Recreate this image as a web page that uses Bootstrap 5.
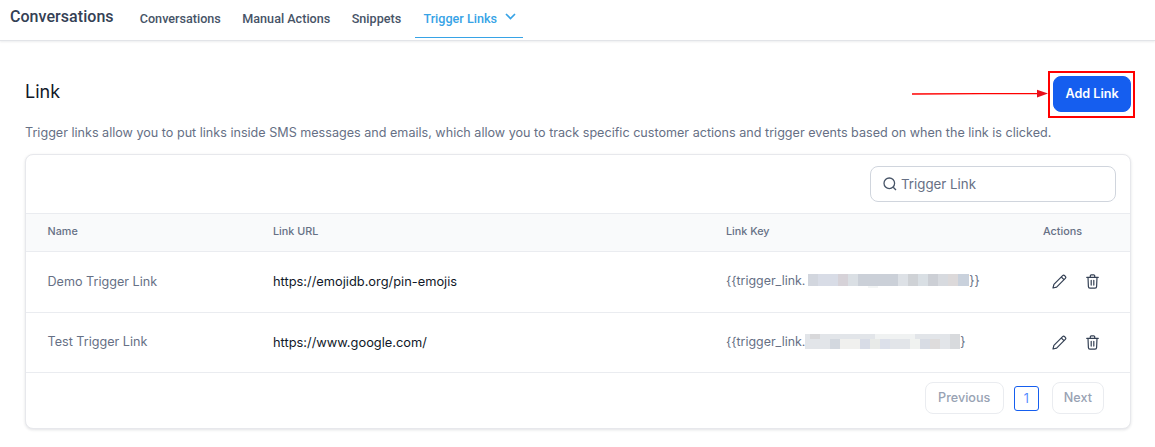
<!doctype html>
<html lang="en">
<head>
<meta charset="utf-8">
<title>Trigger Links</title>
<link href="https://cdn.jsdelivr.net/npm/bootstrap@5.3.0/dist/css/bootstrap.min.css" rel="stylesheet">
<style>
html,body{height:447px;overflow:hidden}
body{font-family:Inter,"Liberation Sans",sans-serif;background:#fff;color:#475467}
.topbar{height:41px;border-bottom:1px solid #e2e4e8;box-shadow:0 1px 2px rgba(16,24,40,.08);padding-left:10px;font-family:Roboto,"Liberation Sans",sans-serif}
.brandname{font-size:16px;font-weight:500;color:#344054;line-height:20px;margin-top:7px;width:119px;letter-spacing:.05px}
.tabitem{font-size:12.6px;font-weight:500;color:#475467;height:38px;line-height:37px;padding:0 10.75px;text-decoration:none;display:block}
.tabitem.on{color:#37a3e6;border-bottom:1px solid #37a3e6;padding:0 7px 0 8px;margin-left:3.5px}
.chevronmark{margin-top:13px}
.pagebody{padding:0 24px 0 25px}
.headrow{height:83px;padding:36px 0 0}
.pagetitle{font-size:18px;font-weight:400;color:#101828;line-height:24px;margin:3px 0 0}
.addbtn{position:absolute;right:0;top:35px;width:78px;height:36px;background:#155eef;border:1px solid #155eef;border-radius:8px;color:#fff;font-size:12.6px;font-weight:600;padding:0}
.addbtn:hover{background:#155eef;color:#fff}
.redbox{position:absolute;right:-4px;top:30px;width:87px;height:47px;border:2px solid #f00;pointer-events:none}
.redarrow{position:absolute;left:912px;top:45px}
.leadtext{font-size:12.6px;line-height:18px;color:#667085;margin:0 0 12px;white-space:nowrap}
.linkcard{height:275px;border:1px solid #e7e8ec;border-radius:8px;box-shadow:0 1px 3px rgba(16,24,40,.12);overflow:hidden;background:#fff}
.searchrow{height:58px;padding:11px 14px 0 0}
.searchbox{width:246px;height:36px;border:1px solid #d0d5dd;border-radius:8px;padding-left:12px;gap:4px;color:#667085;font-size:13.3px}
.searchlabel{padding-top:2px}
.linktable{table-layout:fixed;width:100%;margin:0;font-size:12.6px;color:#667085}
.linktable th{background:#f9fafb;font-size:10.8px;font-weight:500;color:#667085;height:38px;padding:0 0 0 22px;vertical-align:middle;border-top:1px solid #eaecf0;border-bottom:1px solid #eaecf0}
.linktable th:first-child{padding-left:21.5px}
.linktable td{height:60.5px;padding:0 0 0 22px;vertical-align:middle;color:#667085;border-bottom:1px solid #eaecf0;background:#fff}
.linktable td:first-child{padding:1px 0 0 21.5px}
.linktable td.urlcell{color:#101828;font-size:12.85px}
.linktable td.keycell{font-size:12.4px;white-space:nowrap}
.colname{width:225px}.colurl{width:453px}.colkey{width:317px}
.actioncell{white-space:nowrap}
.linktable td.actioncell{padding-left:31px}
.actioncell svg{margin-right:19px}
.pixelbar{vertical-align:-3px}
.pagerrow{height:54px;padding:9px 26px 0 0}
.pagerbtn{height:32px;border:1px solid #eaecf0;border-radius:8px;background:#fff;color:#98a2b3;font-size:12.6px;font-weight:500;padding:0 11px;line-height:30px}
.pagerbtn.wider{padding:0 12.5px}
.pagernum{width:25px;height:25px;border:1px solid #155eef;border-radius:3px;color:#528bff;font-size:12.6px;text-align:center;line-height:23px;margin:4px 13px 0 10px}
</style>
</head>
<body>
<nav class="topbar d-flex align-items-start">
  <div class="brandname">Conversations</div>
  <div class="d-flex">
    <a class="tabitem" href="#">Conversations</a>
    <a class="tabitem" href="#">Manual Actions</a>
    <a class="tabitem" href="#">Snippets</a>
    <a class="tabitem on d-flex align-items-start gap-2" href="#">Trigger Links
      <svg width="11" height="7" viewBox="0 0 11 7" class="chevronmark" fill="none" stroke="#37a3e6" stroke-width="1.7"><path d="M1 1l4.5 4.5L10 1"/></svg>
    </a>
  </div>
</nav>
<main class="pagebody position-relative">
  <div class="headrow position-relative">
    <h1 class="pagetitle">Link</h1>
    <button class="btn addbtn" type="button">Add Link</button>
    <div class="redbox"></div>
  </div>
  <svg class="redarrow" width="137" height="14" viewBox="0 0 137 14"><path d="M0 8L70 7.7l56-.1" stroke="#f00" stroke-width="1.3" fill="none"/><path d="M125 3.7l11 3.9-11 3.9z" fill="#e8101c"/></svg>
  <p class="leadtext">Trigger links allow you to put links inside SMS messages and emails, which allow you to track specific customer actions and trigger events based on when the link is clicked.</p>
  <section class="linkcard">
    <div class="searchrow d-flex justify-content-end">
      <div class="searchbox d-flex align-items-center">
        <svg width="14" height="14" viewBox="0 0 14 14" fill="none" stroke="#475467" stroke-width="1.3"><circle cx="6.3" cy="6.3" r="5.3"/><path d="M10.2 10.2L13 13"/></svg>
        <span class="searchlabel">Trigger Link</span>
      </div>
    </div>
    <table class="table linktable">
      <colgroup><col class="colname"><col class="colurl"><col class="colkey"><col></colgroup>
      <thead><tr><th>Name</th><th>Link URL</th><th>Link Key</th><th>Actions</th></tr></thead>
      <tbody>
        <tr>
          <td>Demo Trigger Link</td>
          <td class="urlcell">https://emojidb.org/pin-emojis</td>
          <td class="keycell">{{trigger_link.<svg class="pixelbar" width="164" height="14" viewBox="-3 0 164 14"><rect width="161" height="12" fill="#d2d6de"/><rect x="10" width="20" height="12" fill="#d8dce6"/><rect x="30" width="10" height="12" fill="#d6d2d8"/><rect x="40" width="10" height="12" fill="#dadfe4"/><rect x="50" width="40" height="12" fill="#cbd0d8"/><rect x="90" width="10" height="12" fill="#dde1e6"/><rect x="100" width="10" height="12" fill="#cfd2d6"/><rect x="110" width="10" height="12" fill="#d9dfe4"/><rect x="120" width="10" height="12" fill="#cccfd5"/><rect x="130" width="10" height="12" fill="#d7dadf"/><rect x="150" width="11" height="12" fill="#c9d1dc"/><rect x="140" width="10" height="12" fill="#dcd9da"/><rect x="60" y="12" width="10" height="2" fill="#f4f6f6"/></svg>}}</td>
          <td class="actioncell">
            <svg width="15" height="15" viewBox="0 0 15 15" fill="none" stroke="#344054" stroke-width="1.2" stroke-linejoin="round"><path d="M1 14l.9-3.6L10.6 1.7a1.5 1.5 0 0 1 2.1 0l.6.6a1.5 1.5 0 0 1 0 2.1L4.6 13.1z"/><path d="M9.3 3l2.7 2.7"/></svg><svg width="13" height="15" viewBox="0 0 13 15" fill="none" stroke="#344054" stroke-width="1.2" stroke-linecap="round"><path d="M.7 3.3h11.6M4.3 3V1.8a1 1 0 0 1 1-1h2.4a1 1 0 0 1 1 1V3M2 3.3l.4 9.3a1.6 1.6 0 0 0 1.6 1.6h5a1.6 1.6 0 0 0 1.6-1.6l.4-9.3M5.2 6.3v4.8M7.8 6.3v4.8"/></svg>
          </td>
        </tr>
        <tr>
          <td>Test Trigger Link</td>
          <td class="urlcell">https://www.google.com/</td>
          <td class="keycell">{{trigger_link.<svg class="pixelbar" width="155" height="15" viewBox="0 0 155 15"><rect width="155" height="15" fill="#e2e5e9"/><rect x="5" width="10" height="5" fill="#d8d8da"/><rect x="25" y="5" width="15" height="10" fill="#d3d8df"/><rect x="35" y="5" width="20" height="10" fill="#f0f0ee"/><rect x="55" y="5" width="10" height="10" fill="#d8dce6"/><rect x="65" y="5" width="10" height="10" fill="#e8eae8"/><rect x="75" y="5" width="10" height="10" fill="#dce0ea"/><rect x="105" y="5" width="10" height="10" fill="#f0f2f0"/><rect x="115" y="5" width="10" height="10" fill="#d8dce4"/><rect x="125" y="5" width="10" height="10" fill="#dedcdc"/><rect x="145" width="10" height="15" fill="#d8dadd"/><rect x="70" width="40" height="5" fill="#f0f2f2"/></svg>}</td>
          <td class="actioncell">
            <svg width="15" height="15" viewBox="0 0 15 15" fill="none" stroke="#344054" stroke-width="1.2" stroke-linejoin="round"><path d="M1 14l.9-3.6L10.6 1.7a1.5 1.5 0 0 1 2.1 0l.6.6a1.5 1.5 0 0 1 0 2.1L4.6 13.1z"/><path d="M9.3 3l2.7 2.7"/></svg><svg width="13" height="15" viewBox="0 0 13 15" fill="none" stroke="#344054" stroke-width="1.2" stroke-linecap="round"><path d="M.7 3.3h11.6M4.3 3V1.8a1 1 0 0 1 1-1h2.4a1 1 0 0 1 1 1V3M2 3.3l.4 9.3a1.6 1.6 0 0 0 1.6 1.6h5a1.6 1.6 0 0 0 1.6-1.6l.4-9.3M5.2 6.3v4.8M7.8 6.3v4.8"/></svg>
          </td>
        </tr>
      </tbody>
    </table>
    <div class="pagerrow d-flex justify-content-end align-items-start">
      <div class="pagerbtn wider">Previous</div>
      <div class="pagernum">1</div>
      <div class="pagerbtn">Next</div>
    </div>
  </section>
</main>
<script src="https://cdn.jsdelivr.net/npm/bootstrap@5.3.0/dist/js/bootstrap.bundle.min.js"></script>
</body>
</html>
